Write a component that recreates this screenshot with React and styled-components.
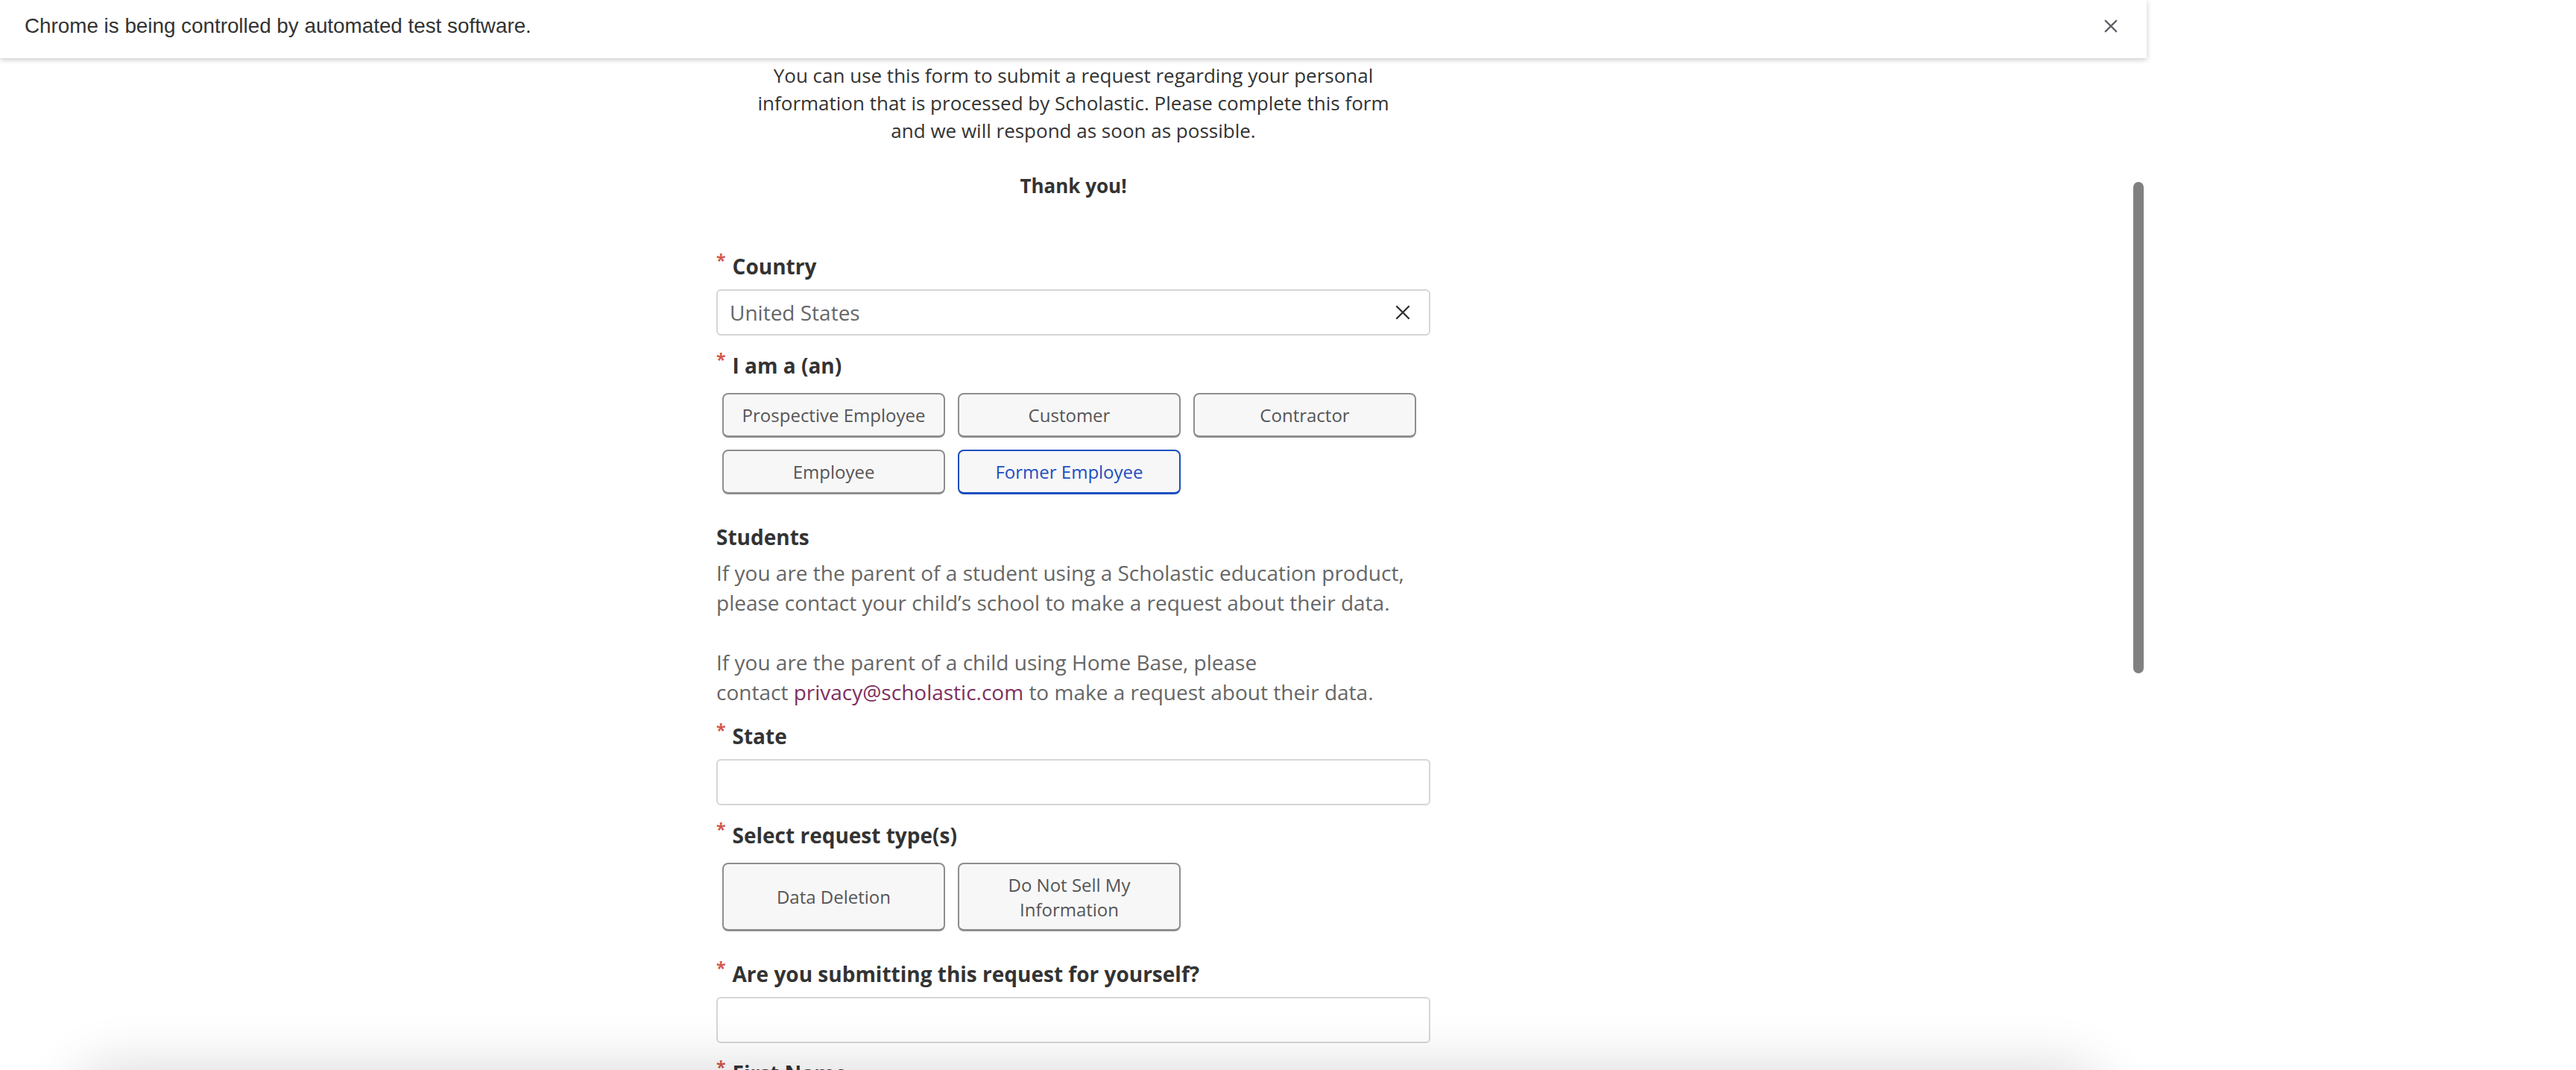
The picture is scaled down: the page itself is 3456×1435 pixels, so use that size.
import React from "react";
import styled, { createGlobalStyle } from "styled-components";

const GlobalStyle = createGlobalStyle`
  html, body {
    margin: 0;
    padding: 0;
    background: #ffffff;
  }
  body {
    font-family: "Open Sans", "Noto Sans", sans-serif;
  }
`;

const roles = [
  { label: "Prospective Employee" },
  { label: "Customer" },
  { label: "Contractor" },
  { label: "Employee" },
  { label: "Former Employee", selected: true },
];

const requestTypes = ["Data Deletion", "Do Not Sell My Information"];

const CloseIcon = ({ size, stroke, width }) => (
  <svg width={size} height={size} viewBox="0 0 20 20" fill="none">
    <path
      d="M2 2 L18 18 M18 2 L2 18"
      stroke={stroke}
      strokeWidth={width}
      strokeLinecap="round"
    />
  </svg>
);

const RequiredLabel = ({ children }) => (
  <Label>
    <Req>*</Req>
    {children}
  </Label>
);

export default function App() {
  return (
    <Frame>
      <GlobalStyle />
      <InfoBar>
        <span>Chrome is being controlled by automated test software.</span>
        <CloseIcon size={18} stroke="#5f6368" width={2.6} />
      </InfoBar>

      <Main>
        <Intro>
          You can use this form to submit a request regarding your personal
          information that is processed by Scholastic. Please complete this
          form and we will respond as soon as possible.
        </Intro>
        <Thanks>Thank you!</Thanks>

        <Field>
          <RequiredLabel>Country</RequiredLabel>
          <TextBox>
            <span>United States</span>
            <CloseIcon size={20} stroke="#333333" width={2.4} />
          </TextBox>
        </Field>

        <Field>
          <RequiredLabel>I am a (an)</RequiredLabel>
          <Choices>
            {roles.map((r) => (
              <Choice key={r.label} $selected={r.selected}>
                {r.label}
              </Choice>
            ))}
          </Choices>
        </Field>

        <Heading>Students</Heading>
        <Note>
          If you are the parent of a student using a Scholastic education
          product, please contact your child’s school to make a request about
          their data.
          <br />
          <br />
          If you are the parent of a child using Home Base, please
          <br />
          contact <Mail href="#">privacy@scholastic.com</Mail> to make a request
          about their data.
        </Note>

        <Field>
          <RequiredLabel>State</RequiredLabel>
          <TextBox />
        </Field>

        <Field>
          <RequiredLabel>Select request type(s)</RequiredLabel>
          <Choices>
            {requestTypes.map((t) => (
              <Choice key={t} $tall>
                {t}
              </Choice>
            ))}
          </Choices>
        </Field>

        <Field>
          <RequiredLabel>Are you submitting this request for yourself?</RequiredLabel>
          <TextBox />
        </Field>

        <Field>
          <RequiredLabel>First Name</RequiredLabel>
          <TextBox />
        </Field>

        <Field>
          <RequiredLabel>Last Name</RequiredLabel>
          <TextBox />
        </Field>
      </Main>

      <ScrollThumb />
      <BottomSheet />
    </Frame>
  );
}

const Frame = styled.div`
  position: relative;
  width: 2880px;
  min-height: 1435px;
`;

const InfoBar = styled.div`
  position: relative;
  z-index: 2;
  height: 78px;
  box-sizing: border-box;
  display: flex;
  align-items: center;
  justify-content: space-between;
  padding: 0 39px 8px 33px;
  background: #ffffff;
  box-shadow: 0 2px 7px rgba(0, 0, 0, 0.22);
  font-family: "Liberation Sans", Arial, sans-serif;
  font-size: 27.8px;
  color: #333333;
`;

const Main = styled.main`
  width: 958px;
  margin: 0 auto;
  padding-top: 5px;
`;

const Intro = styled.p`
  max-width: 860px;
  margin: 0 auto 37px;
  text-align: center;
  font-size: 26px;
  line-height: 37px;
  color: #333333;
`;

const Thanks = styled.p`
  margin: 0 0 69px;
  text-align: center;
  font-size: 26px;
  line-height: 37px;
  font-weight: 700;
  color: #333333;
`;

const Field = styled.div`
  margin-bottom: 20px;
`;

const Label = styled.label`
  display: flex;
  align-items: flex-start;
  margin-bottom: 11px;
  font-size: 28px;
  font-weight: 700;
  line-height: 40px;
  color: #333333;
`;

const Req = styled.span`
  margin: 1px 9px 0 0;
  font-size: 23px;
  line-height: 22px;
  font-weight: 700;
  color: #d4574b;
`;

const TextBox = styled.div`
  height: 62px;
  box-sizing: border-box;
  display: flex;
  align-items: center;
  justify-content: space-between;
  padding: 0 25px 0 16px;
  border: 2px solid #d6d6d6;
  border-radius: 6px;
  background: #ffffff;
  font-size: 28px;
  color: #666666;
`;

const Choices = styled.div`
  display: flex;
  flex-wrap: wrap;
  gap: 16px 17px;
  padding: 8px;
  margin: -2px 0 29px;
`;

const Choice = styled.button`
  width: 299px;
  height: ${(p) => (p.$tall ? "92px" : "60px")};
  box-sizing: border-box;
  padding: 0 12px;
  border: 2px solid ${(p) => (p.$selected ? "#1d4ec0" : "#8e8e8e")};
  border-bottom-width: 3px;
  border-radius: 8px;
  background: #f7f7f7;
  font-family: "Open Sans", "Noto Sans", sans-serif;
  font-size: 24px;
  line-height: 33px;
  color: ${(p) => (p.$selected ? "#1d4ec0" : "#555555")};
  cursor: pointer;
`;

const Heading = styled.h3`
  margin: 0 0 8px;
  font-size: 28px;
  font-weight: 700;
  line-height: 40px;
  color: #333333;
`;

const Note = styled.p`
  margin: 0 0 19px;
  font-size: 28px;
  line-height: 40px;
  color: #666666;
`;

const Mail = styled.a`
  color: #7e2f5f;
  text-decoration: none;
`;

const ScrollThumb = styled.div`
  position: absolute;
  top: 244px;
  right: 4px;
  width: 14px;
  height: 659px;
  border-radius: 7px;
  background: #808080;
`;

const BottomSheet = styled.div`
  position: fixed;
  left: 100px;
  top: 100vh;
  width: 2720px;
  height: 200px;
  border-radius: 60px;
  background: #ffffff;
  box-shadow: 0 0 70px 10px rgba(0, 0, 0, 0.13);
`;
